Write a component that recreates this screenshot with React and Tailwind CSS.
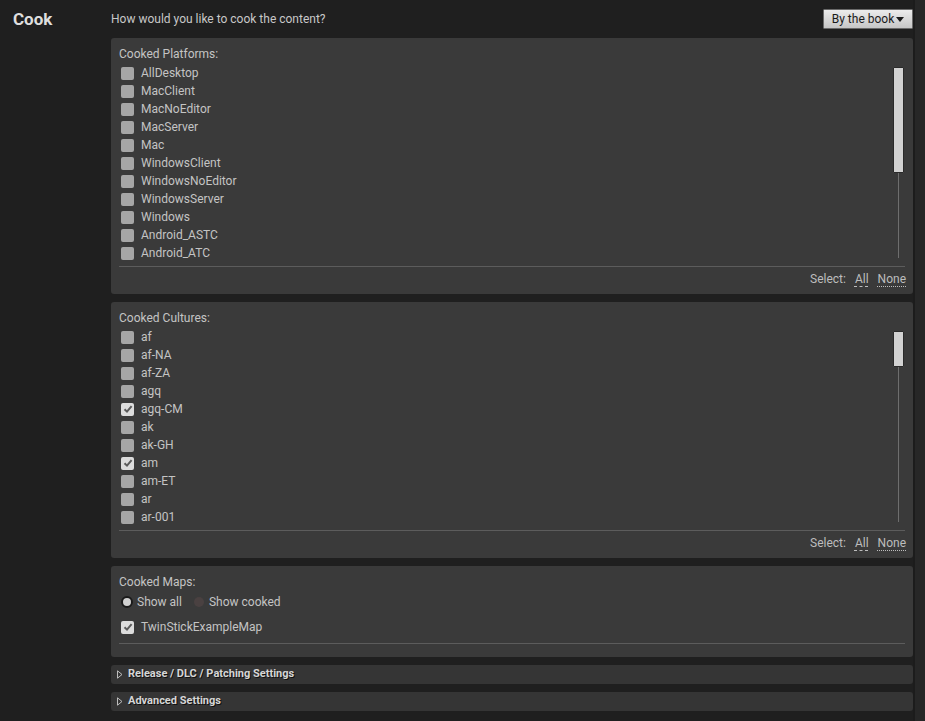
import React from 'react';

const platforms = [
  'AllDesktop', 'MacClient', 'MacNoEditor', 'MacServer', 'Mac', 'WindowsClient',
  'WindowsNoEditor', 'WindowsServer', 'Windows', 'Android_ASTC', 'Android_ATC',
];

const cultures = [
  { name: 'af' }, { name: 'af-NA' }, { name: 'af-ZA' }, { name: 'agq' },
  { name: 'agq-CM', checked: true }, { name: 'ak' }, { name: 'ak-GH' },
  { name: 'am', checked: true }, { name: 'am-ET' }, { name: 'ar' }, { name: 'ar-001' },
];

const Checkbox = ({ checked }) => (
  <div
    className={`w-[13px] h-[13px] rounded-[2px] flex items-center justify-center shrink-0 ${
      checked ? 'bg-[#dcdcdc]' : 'bg-[#a6a6a6]'
    }`}
  >
    {checked && (
      <svg width="10" height="10" viewBox="0 0 10 10">
        <path d="M1.5 5.2 L4 7.6 L8.6 2.2" stroke="#5a5a5a" strokeWidth="2" fill="none" />
      </svg>
    )}
  </div>
);

const Row = ({ label, checked }) => (
  <div className="h-[18px] flex items-center gap-[7px] pl-[2px] shrink-0">
    <Checkbox checked={checked} />
    <span className="text-[12px] text-[#c4c4c4] leading-none">{label}</span>
  </div>
);

const SelectRow = () => (
  <div className="h-[14px] mt-[5px] -mr-[1px] flex items-center justify-end gap-[9px] text-[12px] text-[#bdbdbd]">
    <span>Select:</span>
    <span className="underline decoration-dashed decoration-1 underline-offset-[3px]">All</span>
    <span className="underline decoration-dotted decoration-1 underline-offset-[3px]">None</span>
  </div>
);

// list panel with a scroll bar on the right
const ListPanel = ({ title, thumbTop, thumbHeight, children }) => (
  <div className="h-[256px] rounded-[3px] bg-[#3a3a3a] pt-[9px] px-[8px] flex flex-col">
    <div className="h-[14px] leading-[14px] text-[12px] text-[#c4c4c4]">{title}</div>
    <div className="mt-[3px] h-[197px] flex">
      <div className="flex-1 flex flex-col overflow-hidden">{children}</div>
      <div className="w-[12px] flex flex-col items-start">
        <div style={{ height: thumbTop }} />
        <div
          className="w-[11px] bg-[#d2d2d2] border border-[#2a2a2a] rounded-[1px] shrink-0"
          style={{ height: thumbHeight }}
        />
        <div className="flex-1 w-px ml-[5px] bg-[#6e6e6e] mb-[3px]" />
      </div>
    </div>
    <div className="mt-[5px] h-px bg-[#5c5c5c]" />
    <SelectRow />
  </div>
);

const CollapsedHeader = ({ title }) => (
  <div className="h-[19px] rounded-[3px] bg-[#353535] flex items-center pl-[6px] gap-[5px]">
    <svg width="6" height="9" viewBox="0 0 6 9" className="-mt-[1px]">
      <path d="M0.5 0.8 L5 4.5 L0.5 8.2 Z" stroke="#bdbdbd" strokeWidth="1" fill="none" />
    </svg>
    <span
      className="text-[11px] font-bold text-[#d6d6d6] leading-none -mt-[3px]"
      style={{ textShadow: '1px 1px 0 #111' }}
    >
      {title}
    </span>
  </div>
);

const App = () => {
  return (
    <div
      className="w-[925px] h-[721px] bg-[#1f1f1f] flex overflow-hidden"
      style={{ fontFamily: 'Roboto, "Liberation Sans", sans-serif' }}
    >
      {/* LEFT LABEL */}
      <div className="w-[111px] pl-[13px] pt-[8px]">
        <div className="text-[17px] font-bold text-[#dedede] leading-[22px]">Cook</div>
      </div>

      {/* MAIN */}
      <div className="w-[802px] flex flex-col">
        <div className="h-[38px] flex items-start justify-between pt-[9px]">
          <span className="text-[12px] text-[#c8c8c8] leading-[20px]">How would you like to cook the content?</span>
          <button className="w-[90px] h-[20px] rounded-[1px] border border-[#6a6a6a] bg-gradient-to-b from-[#ececec] to-[#c6c6c6] flex items-center justify-center gap-[2px] text-[12px] text-[#1a1a1a]">
            By the book
            <svg width="8" height="5" viewBox="0 0 8 5">
              <path d="M0 0 L8 0 L4 5 Z" fill="#1a1a1a" />
            </svg>
          </button>
        </div>

        <ListPanel title="Cooked Platforms:" thumbTop={3} thumbHeight={106}>
          {platforms.map(p => (
            <Row key={p} label={p} />
          ))}
        </ListPanel>

        <div className="h-[8px]" />

        <ListPanel title="Cooked Cultures:" thumbTop={3} thumbHeight={36}>
          {cultures.map(c => (
            <Row key={c.name} label={c.name} checked={c.checked} />
          ))}
        </ListPanel>

        {/* COOKED MAPS */}
        <div className="mt-[8px] h-[91px] rounded-[3px] bg-[#3a3a3a] pt-[9px] px-[8px] flex flex-col">
          <div className="h-[14px] leading-[14px] text-[12px] text-[#c4c4c4]">Cooked Maps:</div>
          <div className="mt-[4px] h-[18px] flex items-center pl-[2px] text-[12px] text-[#c4c4c4]">
            <div className="w-[12px] h-[12px] rounded-full bg-[#d0d0d0] border-2 border-[#1a1a1a] mr-[4px]" />
            <span>Show all</span>
            <div className="w-[10px] h-[10px] rounded-full bg-[#4a4141] ml-[12px] mr-[5px]" />
            <span>Show cooked</span>
          </div>
          <div className="mt-[7px]">
            <Row label="TwinStickExampleMap" checked />
          </div>
          <div className="mt-[7px] h-px bg-[#5c5c5c]" />
        </div>

        <div className="mt-[8px]">
          <CollapsedHeader title="Release / DLC / Patching Settings" />
        </div>
        <div className="mt-[8px]">
          <CollapsedHeader title="Advanced Settings" />
        </div>
      </div>

      {/* RIGHT EDGE */}
      <div className="w-[12px] border-l-2 border-[#1c1c1c] bg-[#272727]" />
    </div>
  );
};

export default App;
